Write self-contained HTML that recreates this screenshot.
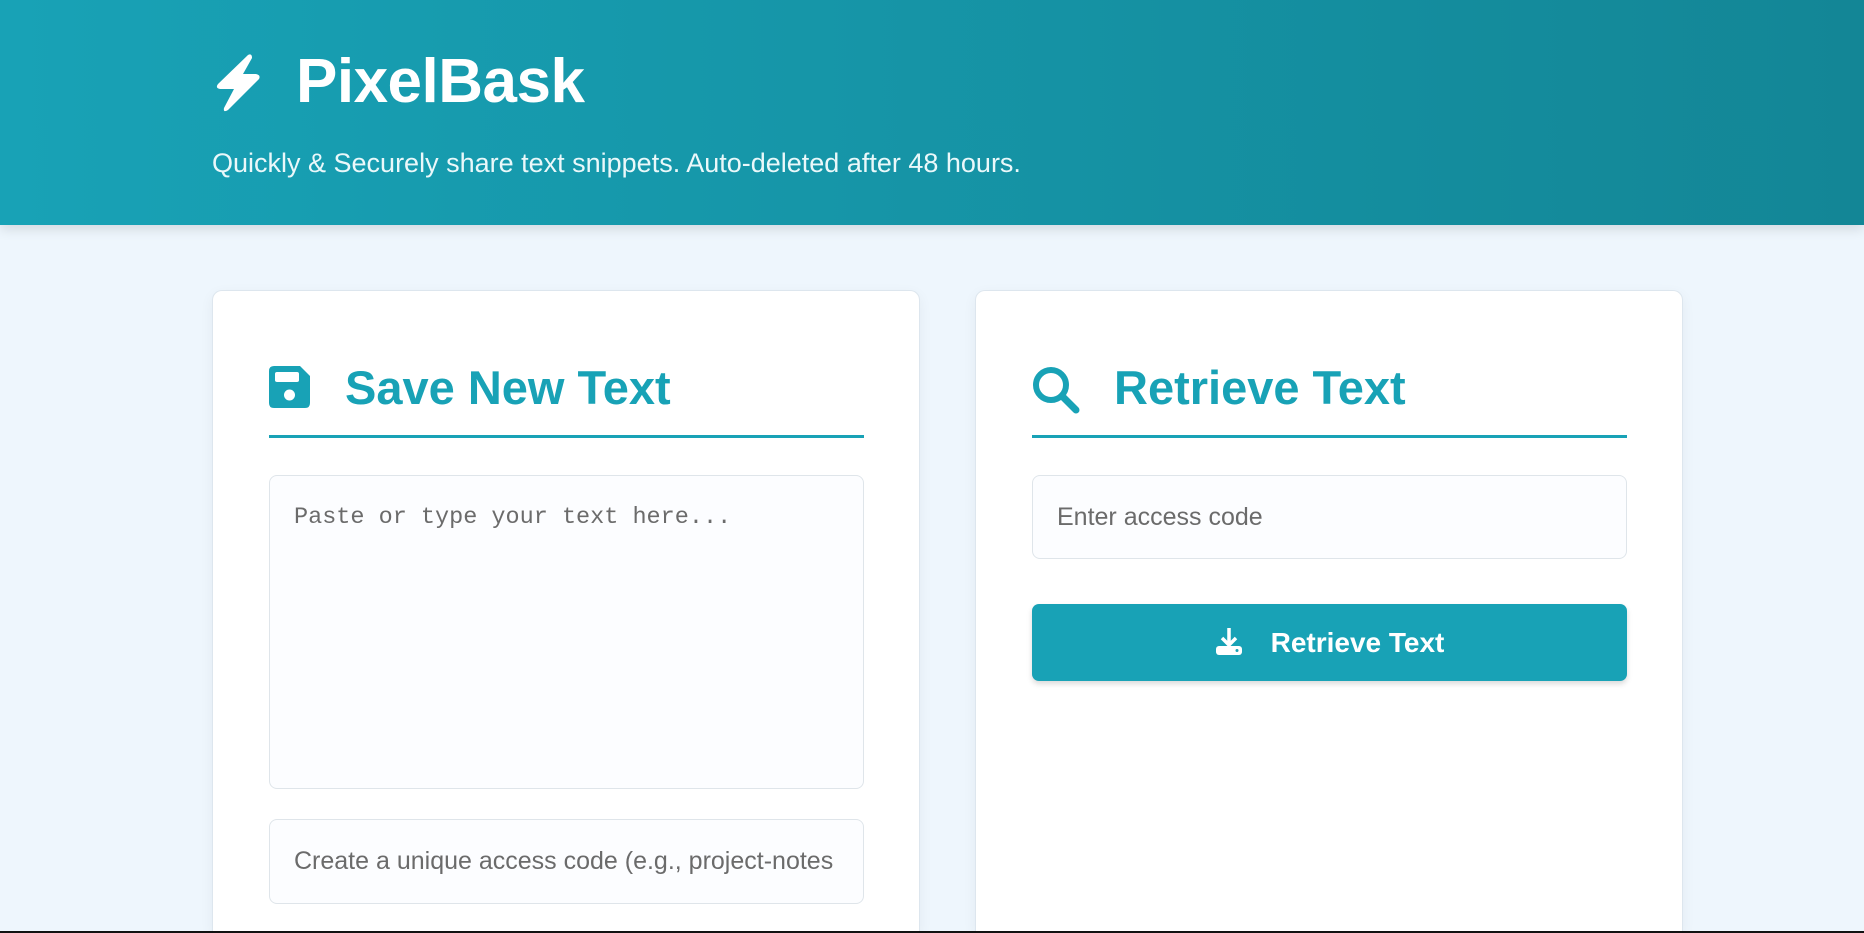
<!DOCTYPE html>
<html style="overflow:hidden"><head><style>
*{box-sizing:border-box;margin:0;padding:0}
html,body{width:1864px;height:933px;overflow:hidden}
body{background:#eef6fd;font-family:"Liberation Sans",sans-serif;position:relative}
.hdr{position:absolute;left:0;top:0;width:1864px;height:225px;background:linear-gradient(90deg,#18a2b6,#138696);box-shadow:0 4px 12px rgba(0,0,0,.12)}
.logo{position:absolute;left:212px;top:52px}
.title{position:absolute;left:296px;top:46px;color:#fff;font-weight:bold;font-size:62px;letter-spacing:-0.5px}
.sub{position:absolute;left:212px;top:148px;color:#eaf8fa;font-size:27px}
.card{position:absolute;top:290px;width:708px;height:643px;background:#fff;border:1px solid #dde6ee;border-bottom:none;border-radius:10px 10px 0 0;box-shadow:0 4px 14px rgba(0,0,0,.05)}
.h{position:absolute;left:56px;top:60px;width:595px;height:87px;border-bottom:3px solid #18a2b6}
.h span{position:absolute;left:76px;top:9px;font-size:47px;color:#18a2b6;font-weight:bold}
.h svg{position:absolute;left:0;top:15px}
.box{position:absolute;left:56px;width:595px;background:#fcfdff;border:1px solid #dfe5ea;border-radius:8px;color:#6b6b6b;font-size:25px}
.btn{position:absolute;left:56px;top:313px;width:595px;height:77px;background:#18a2b6;border-radius:7px;box-shadow:0 3px 6px rgba(0,0,0,.15);color:#fff;font-weight:bold;font-size:28px;text-align:center;line-height:77px}
</style></head><body>
<div class="hdr">
<svg class="logo" width="52" height="62" viewBox="0 0 52 62"><path d="M36 3 L6 32 Q3 36 8 37 L22 37 L12 56 Q11 61 16 58 L47 27 Q49 23 44 22 L31 22 L40 6 Q40 1 36 3Z" fill="#fff"/></svg>
<div class="title">PixelBask</div>
<div class="sub">Quickly &amp; Securely share text snippets. Auto-deleted after 48 hours.</div>
</div>
<div class="card" style="left:212px">
<div class="h"><svg width="41" height="42" viewBox="0 0 41 42"><path d="M5 0H31L41 10V37Q41 42 36 42H5Q0 42 0 37V5Q0 0 5 0Z" fill="#18a2b6"/><rect x="6" y="6" width="24" height="10" rx="2" fill="#fff"/><circle cx="20.5" cy="29" r="5.5" fill="#fff"/></svg><span>Save New Text</span></div>
<div class="box" style="top:184px;height:314px;padding:28px 24px;font-family:'Liberation Mono',monospace;font-size:23.5px">Paste or type your text here...</div>
<div class="box" style="top:528px;height:85px;padding:27px 24px;white-space:nowrap;overflow:hidden">Create a unique access code (e.g., project-notes</div>
</div>
<div class="card" style="left:975px">
<div class="h"><svg width="48" height="48" viewBox="0 0 48 48"><circle cx="19" cy="19" r="15" fill="none" stroke="#18a2b6" stroke-width="6"/><path d="M30 30L44 44" stroke="#18a2b6" stroke-width="7" stroke-linecap="round"/></svg><span style="left:82px">Retrieve Text</span></div>
<div class="box" style="top:184px;height:84px;padding:27px 24px">Enter access code</div>
<div class="btn"><svg width="28" height="30" viewBox="0 0 28 30" style="vertical-align:-4px;margin-right:28px"><path d="M14 2V19M7 12L14 19L21 12" stroke="#fff" stroke-width="3.5" fill="none"/><rect x="1" y="20" width="26" height="9" rx="3" fill="#fff"/><circle cx="22" cy="24.5" r="1.5" fill="#18a2b6"/></svg>Retrieve Text</div>
</div>
<div style="position:absolute;left:0;top:931px;width:1864px;height:2px;background:#111"></div>
</body></html>
